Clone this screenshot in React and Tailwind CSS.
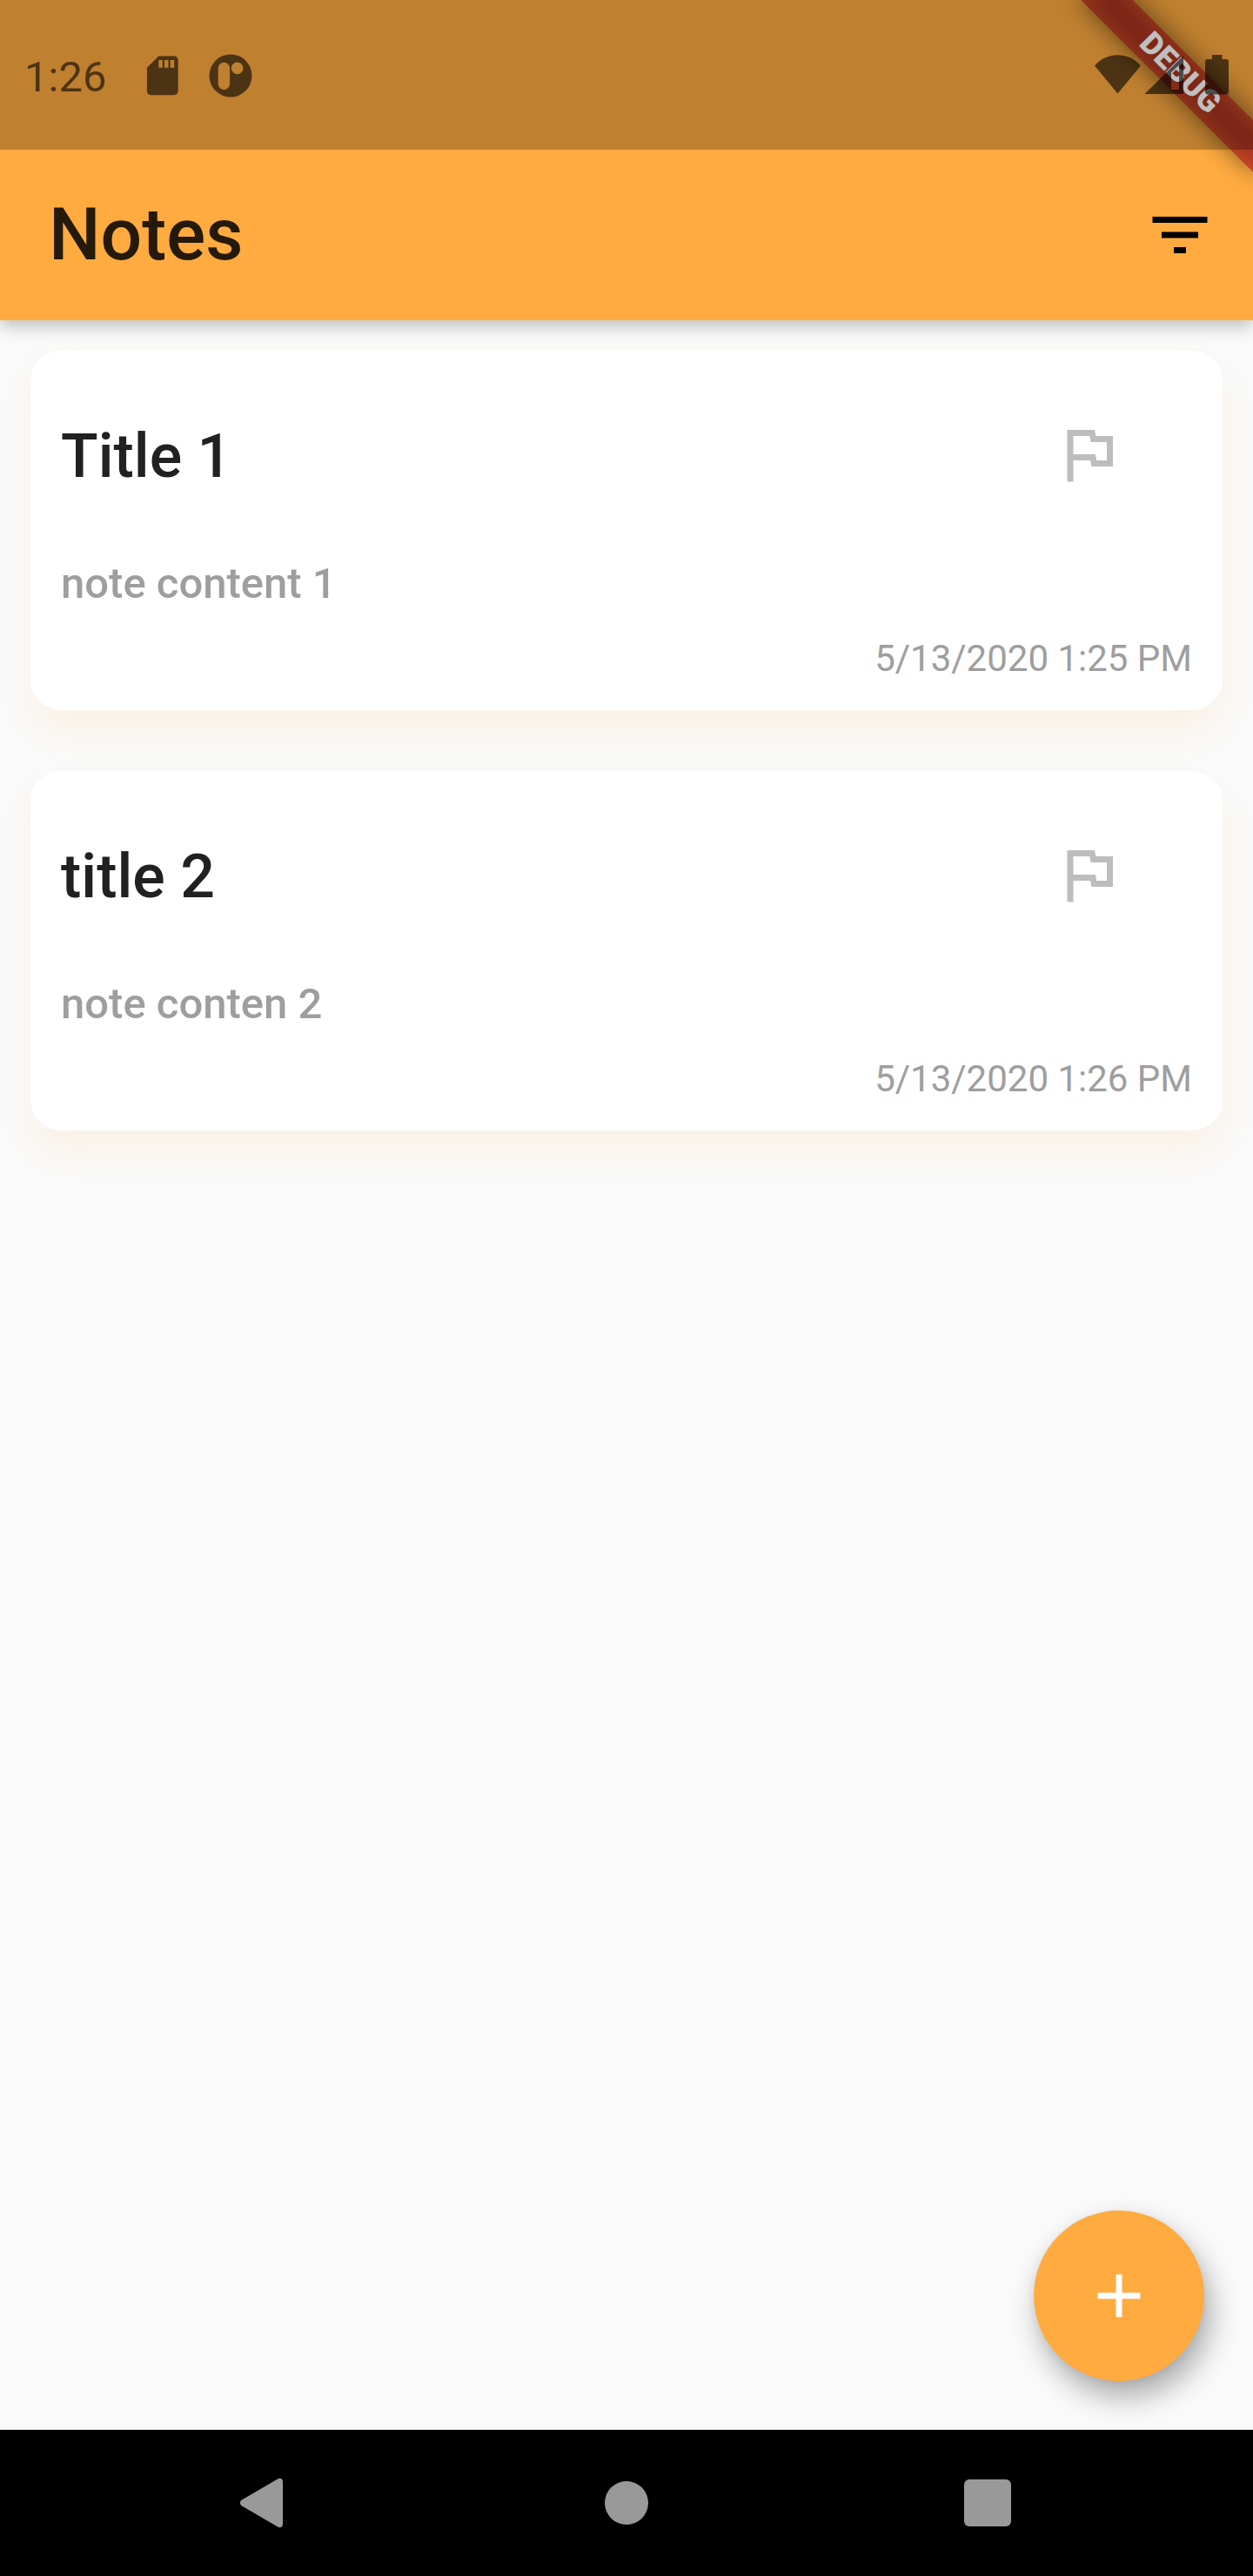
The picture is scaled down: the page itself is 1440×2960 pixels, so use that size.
const notes = [
  { title: 'Title 1', content: 'note content 1', date: '5/13/2020 1:25 PM' },
  { title: 'title 2', content: 'note conten 2', date: '5/13/2020 1:26 PM' },
];

function MaterialIcon({ d, className }) {
  return (
    <svg viewBox="0 0 24 24" fill="currentColor" className={className} aria-hidden="true">
      <path d={d} />
    </svg>
  );
}

function StatusBar() {
  return (
    <div className="relative flex h-[172px] shrink-0 items-start bg-black/25 pl-7 text-black/60">
      <span className="mt-[60px] text-[49px] leading-[57px]">1:26</span>
      <MaterialIcon
        className="mt-[59.5px] ml-[38px] size-[53.6px]"
        d="M18 2h-8L4.02 8 4 20c0 1.1.9 2 2 2h12c1.1 0 2-.9 2-2V4c0-1.1-.9-2-2-2zm-6 6h-2V4h2v4zm3 0h-2V4h2v4zm3 0h-2V4h2v4z"
      />
      <svg viewBox="0 0 50 50" fill="currentColor" className="mt-[61.5px] ml-[26px] size-[50px]">
        <path
          fillRule="evenodd"
          d="M25 .5a24.5 24.5 0 1 1 0 49a24.5 24.5 0 1 1 0-49zM17.4 9.7a6.7 6.7 0 0 0-6.7 6.7v17.8a6.7 6.7 0 0 0 13.4 0V16.4a6.7 6.7 0 0 0-6.7-6.7zM32.7 9.6a6.8 6.8 0 1 0 0 13.6a6.8 6.8 0 1 0 0-13.6z"
        />
      </svg>
      <div className="mt-[63px] mr-[28px] ml-auto flex">
        <svg viewBox="0 0 53 46" fill="currentColor" className="h-[46px] w-[53px]">
          <path d="M26.5 44.5L0 12.5C7 4.5 16.5 .3 26.5 .3S46 4.5 53 12.5z" />
        </svg>
        <svg viewBox="0 0 45 46" fill="currentColor" className="ml-[4px] h-[46px] w-[45px]">
          <path fillRule="evenodd" d="M.5 45L45 1v44zM31 40h9V12l-9 8z" />
        </svg>
        <svg viewBox="0 0 27 46" fill="currentColor" className="ml-[25px] h-[46px] w-[27px]">
          <path d="M8 0h11.5v5H24a3 3 0 0 1 3 3v34.5a3 3 0 0 1-3 3H3a3 3 0 0 1-3-3V8a3 3 0 0 1 3-3h5z" />
        </svg>
      </div>
    </div>
  );
}

function DebugBanner() {
  return (
    <div className="pointer-events-none absolute top-0 right-0 size-[300px] overflow-hidden">
      <div className="absolute top-[63px] right-[-56px] h-[42px] w-[280px] rotate-45">
        <div className="absolute inset-0 bg-black/50 blur-[14px]" />
        <div className="absolute inset-0 flex items-center justify-center bg-[#b71c1c]/63 text-[35.7px] leading-none font-black text-white">
          DEBUG
        </div>
      </div>
    </div>
  );
}

function NoteCard({ note }) {
  return (
    <article className="flex h-[413px] flex-col rounded-[35px] bg-white p-[35px] shadow-[0_24px_44px_rgba(255,171,64,0.11)]">
      <div className="flex h-[168px] items-center justify-between">
        <h2 className="pt-[3px] text-[70px] leading-[82px] font-medium text-[#212121]">{note.title}</h2>
        <button className="mr-[35px] flex size-[168px] items-center justify-center text-[#bdbdbd]">
          <MaterialIcon
            className="size-[84px]"
            d="M12.36 6l.4 2H18v6h-3.36l-.4-2H7V6h5.36M14 4H5v17h2v-7h5.6l.4 2h7V6h-5.6L14 4z"
          />
        </button>
      </div>
      <p className="mt-[36px] text-[49px] leading-[57px] font-medium text-[#9e9e9e]">{note.content}</p>
      <time className="mt-auto text-right text-[42px] leading-[49px] text-[#9e9e9e]">{note.date}</time>
    </article>
  );
}

function NavBar() {
  return (
    <nav className="flex h-[168px] shrink-0 items-center justify-center bg-black text-[#999999]">
      <div className="flex w-[415px] justify-center">
        <svg viewBox="0 0 60 60" fill="currentColor" className="size-[60px]">
          <path d="M2.6 26.8L44.2 2.4C47 .9 50 2.300 50 5.500v49c0 3.200-3 4.600-5.800 3.100L2.600 33.200C.4 31.800.4 28.200 2.600 26.800z" />
        </svg>
      </div>
      <div className="flex w-[415px] justify-center">
        <div className="size-[50px] rounded-full bg-current" />
      </div>
      <div className="flex w-[415px] justify-center">
        <div className="size-[54px] rounded-[6px] bg-current" />
      </div>
    </nav>
  );
}

export default function App() {
  return (
    <div className="relative flex h-[2960px] w-[1440px] flex-col overflow-hidden bg-[#fafafa] font-[Roboto,sans-serif]">
      <header className="relative h-[368px] shrink-0 bg-[#ffab40] shadow-[0_7px_19px_rgba(0,0,0,0.24)]">
        <DebugBanner />
        <StatusBar />
        <div className="flex h-[196px] items-center justify-between pr-[42px] pl-14">
          <h1 className="text-[84px] leading-[98px] font-medium text-[#25190a]">Notes</h1>
          <MaterialIcon
            className="size-[84px] text-black"
            d="M10 18h4v-2h-4v2zM3 6v2h18V6H3zm3 7h12v-2H6v2z"
          />
        </div>
      </header>
      <main className="flex flex-1 flex-col gap-[70px] p-[35px]">
        {notes.map((note) => (
          <NoteCard key={note.date} note={note} />
        ))}
      </main>
      <button className="absolute right-14 bottom-[224px] flex size-[196px] items-center justify-center rounded-full bg-[#ffab40] text-white shadow-[7px_18px_34px_rgba(0,0,0,0.32),0_2px_12px_rgba(0,0,0,0.06)]">
        <MaterialIcon className="size-[84px]" d="M19 13h-6v6h-2v-6H5v-2h6V5h2v6h6v2z" />
      </button>
      <NavBar />
    </div>
  );
}
